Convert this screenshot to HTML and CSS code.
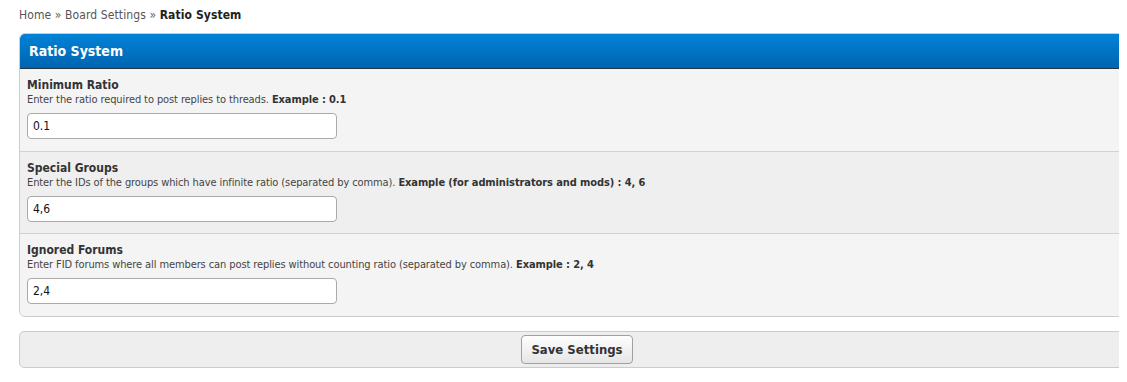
FILE: index.html
```html
<!DOCTYPE html>
<html lang="en">
<head>
    <meta charset="UTF-8">
    <meta name="viewport" content="width=device-width, initial-scale=1.0">
    <title>Ratio System</title>
    <link rel="stylesheet" href="styles.css">
</head>
<body>
    <div class="breadcrumb">
        <a href="#">Home</a> &raquo; <a href="#">Board Settings</a> &raquo; <span class="current">Ratio System</span>
    </div>

    <div class="clip">
        <form class="settings">
            <div class="panel">
                <div class="panel-head">Ratio System</div>

                <div class="row first">
                    <label class="row-label" for="min_ratio">Minimum Ratio</label>
                    <div class="row-desc">Enter the ratio required to post replies to threads. <b>Example : 0.1</b></div>
                    <input type="text" id="min_ratio" class="text-input" value="0.1">
                </div>

                <div class="row alt">
                    <label class="row-label" for="special_groups">Special Groups</label>
                    <div class="row-desc">Enter the IDs of the groups which have infinite ratio (separated by comma). <b>Example (for administrators and mods) : 4, 6</b></div>
                    <input type="text" id="special_groups" class="text-input" value="4,6">
                </div>

                <div class="row last">
                    <label class="row-label" for="ignored_forums">Ignored Forums</label>
                    <div class="row-desc">Enter FID forums where all members can post replies without counting ratio (separated by comma). <b>Example : 2, 4</b></div>
                    <input type="text" id="ignored_forums" class="text-input" value="2,4">
                </div>
            </div>

            <div class="form-foot">
                <button type="submit" class="save-button">Save Settings</button>
            </div>
        </form>
    </div>
</body>
</html>
```

FILE: styles.css
```css
body {
    margin: 0;
    padding: 0;
    background: #fff;
    font-family: "DejaVu Sans Condensed", "Liberation Sans", sans-serif;
    font-size: 12px;
    color: #333;
    overflow: hidden;
}
.breadcrumb {
    padding: 6px 19px 0;
    height: 27px;
    line-height: 18px;
    font-size: 12px;
    color: #666;
    letter-spacing: 0.1px;
}
.breadcrumb a {
    color: #555;
    text-decoration: none;
}
.breadcrumb .current {
    color: #222;
    font-weight: bold;
}
/* panel runs past the window edge, so clip it like the original */
.clip {
    margin-left: 19px;
    width: 1100px;
    overflow: hidden;
}
.settings {
    width: 1116px;
}
.panel {
    border: 1px solid #ccc;
    border-radius: 6px;
    overflow: hidden;
    background: #f4f4f4;
}
.panel-head {
    height: 34px;
    line-height: 34px;
    padding-left: 9px;
    background: linear-gradient(#0182d6, #0065b1);
    border-bottom: 1px solid #263544;
    color: #fff;
    font-size: 14px;
    font-weight: bold;
}
.row {
    height: 82px;
    box-sizing: border-box;
    padding: 8px 7px 0;
    background: #f4f4f4;
    border-bottom: 1px solid #d2d2d2;
}
.row.first {
    height: 83px;
}
.row.alt {
    background: #efefef;
}
.row.last {
    border-bottom: none;
}
.row-label {
    display: block;
    font-weight: bold;
    font-size: 12px;
    line-height: 16px;
    color: #333;
}
.row-desc {
    font-size: 11px;
    line-height: 13px;
    color: #444;
    letter-spacing: -0.1px;
}
.row-desc b {
    color: #333;
}
.text-input {
    display: block;
    margin-top: 7px;
    width: 310px;
    height: 26px;
    box-sizing: border-box;
    padding: 2px 5px;
    border: 1px solid #aaa;
    border-radius: 4px;
    background: #fff;
    font-family: inherit;
    font-size: 12px;
    color: #111;
}
.form-foot {
    margin-top: 14px;
    height: 37px;
    box-sizing: border-box;
    padding-top: 3px;
    border: 1px solid #ccc;
    border-radius: 5px;
    background: #eee;
    text-align: center;
}
.save-button {
    height: 29px;
    padding: 0 9px;
    border: 1px solid #a0a0a0;
    border-radius: 4px;
    background: linear-gradient(#fdfdfd, #e6e6e6);
    font-family: inherit;
    font-size: 13px;
    font-weight: bold;
    color: #333;
    cursor: pointer;
}
```
